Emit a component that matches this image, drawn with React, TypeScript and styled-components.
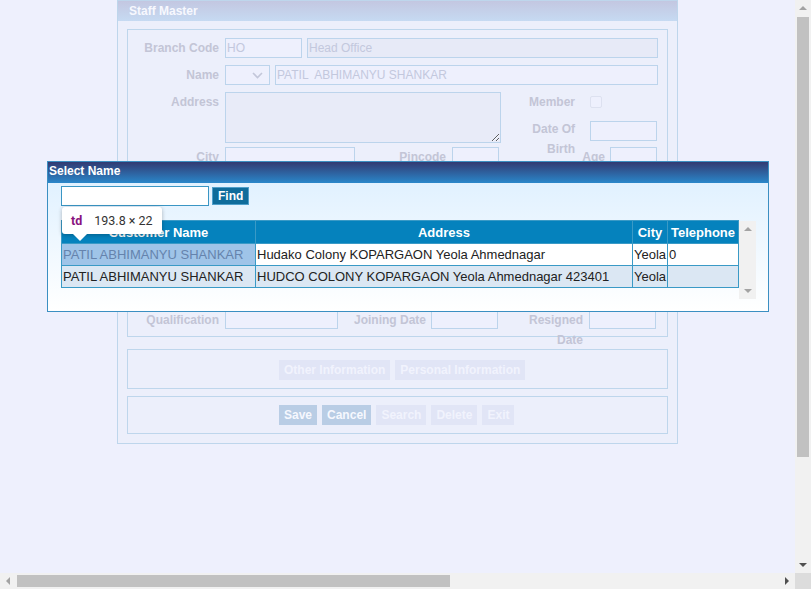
import React from 'react';
import styled, { createGlobalStyle } from 'styled-components';

const GlobalStyle = createGlobalStyle`
  html, body {
    margin: 0;
    padding: 0;
    overflow: hidden;
  }
  body {
    background: #eef0fd;
    font-family: "Liberation Sans", Arial, sans-serif;
    font-size: 12px;
  }
`;

// 페이지 전체
const Page = styled.div`
  position: relative;
  width: 100vw;
  height: 100vh;
  padding-left: 117px;
  box-sizing: border-box;
  overflow: hidden;
`;

const Panel = styled.div`
  width: 561px;
  box-sizing: border-box;
  border: 1px solid #bed6ec;
  background: #eceffb;
`;

const PanelHeader = styled.div`
  height: 20px;
  line-height: 20px;
  padding-left: 11px;
  background: linear-gradient(#c3c7e1, #c6daf2);
  color: #f7f8fe;
  font-weight: bold;
  font-size: 12px;
`;

const PanelBody = styled.div`
  padding: 8px 9px 9px;
`;

const Fieldset = styled.div`
  border: 1px solid #bed6ec;
  padding: 8px 0 6px;
`;

const Row = styled.div<{ $mt?: number; $h?: number }>`
  display: flex;
  align-items: flex-start;
  margin-top: ${(p) => p.$mt ?? 0}px;
  height: ${(p) => p.$h ?? 20}px;
`;

const Label = styled.div<{ $w: number; $gap?: number }>`
  width: ${(p) => p.$w}px;
  margin-right: ${(p) => p.$gap ?? 6}px;
  flex-shrink: 0;
  height: 20px;
  line-height: 20px;
  text-align: right;
  font-weight: bold;
  color: #c3c5d6;
  white-space: nowrap;
`;

const Input = styled.div<{ $w: number; $bg?: string; $h?: number }>`
  width: ${(p) => p.$w}px;
  height: ${(p) => p.$h ?? 20}px;
  line-height: ${(p) => (p.$h ?? 20) - 2}px;
  flex-shrink: 0;
  box-sizing: border-box;
  border: 1px solid #bcd4ec;
  background: ${(p) => p.$bg ?? '#eef0fd'};
  color: #c3c8dd;
  padding: 0 1px;
  white-space: pre;
  overflow: hidden;
`;

const Select = styled.div`
  width: 45px;
  height: 20px;
  margin-right: 5px;
  box-sizing: border-box;
  border: 1px solid #bcd4ec;
  background: #eef0fd;
  display: flex;
  align-items: center;
  justify-content: flex-end;
  padding-right: 6px;
`;

const TextArea = styled.textarea`
  width: 276px;
  height: 51px;
  box-sizing: border-box;
  border: 1px solid #bcd4ec;
  background: #e8ebf8;
  margin: 0;
  padding: 1px;
  flex-shrink: 0;
  outline: none;
`;

const RightColumn = styled.div`
  margin-left: 28px;
  display: flex;
  flex-direction: column;
  gap: 7px;
`;

const SubRow = styled.div`
  display: flex;
  align-items: flex-start;
  height: 20px;
`;

const CheckBox = styled.div`
  width: 12px;
  height: 12px;
  margin-top: 4px;
  box-sizing: border-box;
  border: 1px solid #dde1f0;
  border-radius: 2px;
  background: #eef0fd;
`;

const Hidden = styled.div`
  display: flex;
`;

const ButtonBox = styled.div<{ $mt: number; $pt: number }>`
  margin-top: ${(p) => p.$mt}px;
  border: 1px solid #bed6ec;
  padding: ${(p) => p.$pt}px 0 8px 151px;
  display: flex;
  gap: 5px;
`;

const FormButton = styled.div<{ $active?: boolean }>`
  height: 20px;
  line-height: 20px;
  padding: 0 5px;
  font-weight: bold;
  font-size: 12px;
  background: ${(p) => (p.$active ? '#b9cde5' : '#e1e5f6')};
  color: ${(p) => (p.$active ? '#f6f8fe' : '#f1f3fd')};
`;

/* ---------- 선택 모달 ---------- */

const Modal = styled.div`
  position: absolute;
  left: 47px;
  top: 161px;
  width: 722px;
  height: 151px;
  box-sizing: border-box;
  border: 1px solid #3b8fc2;
  background: linear-gradient(#dcefff, #ffffff);
`;

const ModalTitle = styled.div`
  height: 21px;
  line-height: 18px;
  padding-left: 1px;
  background: linear-gradient(#323a72, #2a87ca);
  color: #fff;
  font-weight: bold;
  font-size: 12px;
`;

const ModalBody = styled.div`
  padding: 3px 0 0 13px;
`;

const SearchRow = styled.div`
  display: flex;
  align-items: center;
  gap: 3px;
`;

const SearchInput = styled.input`
  width: 148px;
  height: 20px;
  box-sizing: border-box;
  border: 1px solid #3a96c4;
  background: #fff;
  margin: 0;
  padding: 0 2px;
  outline: none;
`;

const FindButton = styled.button`
  height: 18px;
  box-sizing: border-box;
  padding: 0 5px;
  margin: 0;
  border: 1px solid #4f9fcb;
  background: #0f6c9b;
  color: #fff;
  font-family: "Liberation Sans", Arial, sans-serif;
  font-weight: bold;
  font-size: 12px;
  line-height: 16px;
`;

const TableArea = styled.div`
  margin-top: 14px;
  display: flex;
  align-items: flex-start;
`;

const Table = styled.table`
  width: 677px;
  border-collapse: collapse;
  table-layout: fixed;
  font-size: 13px;
`;

const Th = styled.th`
  height: 22px;
  padding: 0;
  background: #0582bd;
  color: #fff;
  font-weight: bold;
  text-align: center;
  border: 1px solid #3a9ac6;
  white-space: nowrap;
  overflow: hidden;
`;

const Td = styled.td<{ $bg: string; $highlight?: boolean }>`
  height: 21px;
  padding: 0 1px;
  background: ${(p) => (p.$highlight ? '#9fc4e8' : p.$bg)};
  color: ${(p) => (p.$highlight ? '#6583ad' : '#222')};
  border: 1px solid #3a9ac6;
  white-space: nowrap;
  overflow: hidden;
`;

// 표 옆의 세로 스크롤바 (내용이 다 보여서 thumb 없음)
const MiniScroll = styled.div`
  width: 17px;
  height: 78px;
  margin-top: 1px;
  background: #f1f1f1;
  display: flex;
  flex-direction: column;
  justify-content: space-between;
  align-items: center;
  padding: 6px 0;
  box-sizing: border-box;
`;

const Arrow = styled.div<{ $dir: 'up' | 'down' | 'left' | 'right'; $color: string }>`
  width: 0;
  height: 0;
  ${(p) =>
    p.$dir === 'up'
      ? `border-left: 4px solid transparent; border-right: 4px solid transparent; border-bottom: 4px solid ${p.$color};`
      : p.$dir === 'down'
      ? `border-left: 4px solid transparent; border-right: 4px solid transparent; border-top: 4px solid ${p.$color};`
      : p.$dir === 'left'
      ? `border-top: 4px solid transparent; border-bottom: 4px solid transparent; border-right: 4px solid ${p.$color};`
      : `border-top: 4px solid transparent; border-bottom: 4px solid transparent; border-left: 4px solid ${p.$color};`}
`;

const Tooltip = styled.div`
  position: absolute;
  left: 14px;
  top: 45px;
  width: 100px;
  height: 27px;
  box-sizing: border-box;
  padding-left: 9px;
  display: flex;
  align-items: center;
  gap: 12px;
  background: #fff;
  border-radius: 3px;
  box-shadow: 0 1px 4px rgba(0, 0, 0, 0.28);
  font-family: Roboto, "Noto Sans", sans-serif;
  font-size: 12.5px;

  &::after {
    content: '';
    position: absolute;
    left: 11px;
    bottom: -7px;
    border-left: 7px solid transparent;
    border-right: 7px solid transparent;
    border-top: 7px solid #fff;
  }
`;

const TagName = styled.span`
  color: #881280;
  font-weight: bold;
`;

const TagSize = styled.span`
  color: #333;
`;

/* ---------- 브라우저 스크롤바 ---------- */

const VScroll = styled.div`
  position: fixed;
  top: 0;
  right: 0;
  width: 16px;
  height: calc(100% - 16px);
  background: #f1f1f1;
  display: flex;
  flex-direction: column;
  align-items: center;
`;

const VThumb = styled.div`
  width: 12px;
  height: 440px;
  margin: 1px 0 auto;
  background: #c1c1c1;
`;

const HScroll = styled.div`
  position: fixed;
  left: 0;
  bottom: 0;
  width: calc(100% - 16px);
  height: 16px;
  background: #f1f1f1;
  display: flex;
  align-items: center;
`;

const HThumb = styled.div`
  width: 433px;
  height: 12px;
  margin: 0 auto 0 1px;
  background: #c1c1c1;
`;

const Corner = styled.div`
  position: fixed;
  right: 0;
  bottom: 0;
  width: 16px;
  height: 16px;
  background: #dcdcdc;
`;

const ArrowSlot = styled.div`
  width: 16px;
  height: 16px;
  flex-shrink: 0;
  display: flex;
  align-items: center;
  justify-content: center;
`;

const rows = [
  {
    name: 'PATIL ABHIMANYU SHANKAR',
    address: 'Hudako Colony KOPARGAON Yeola Ahmednagar',
    city: 'Yeola',
    phone: '0',
    bg: '#ffffff',
  },
  {
    name: 'PATIL ABHIMANYU SHANKAR',
    address: 'HUDCO COLONY KOPARGAON Yeola Ahmednagar 423401',
    city: 'Yeola',
    phone: '',
    bg: '#dbe7f3',
  },
];

const hiddenRows = [
  ['State', 'Country', 'Phone'],
  ['Mobile', 'Email', 'Gender'],
  ['Designation', 'Department', 'Grade'],
  ['Salary', 'Bank', 'Account No'],
  ['PAN No', 'PF No', 'Blood Group'],
];

export default function App() {
  return (
    <>
      <GlobalStyle />
      <Page>
        <Panel>
          <PanelHeader>Staff Master</PanelHeader>
          <PanelBody>
            <Fieldset>
              <Row>
                <Label $w={91}>Branch Code</Label>
                <Input $w={77}>HO</Input>
                <Input $w={351} $bg="#e7eaf7" style={{ marginLeft: 5 }}>
                  Head Office
                </Input>
              </Row>
              <Row $mt={7}>
                <Label $w={91}>Name</Label>
                <Select>
                  <svg width="11" height="7" viewBox="0 0 11 7">
                    <path d="M1 1l4.5 4.5L10 1" fill="none" stroke="#c3c7da" strokeWidth="1.6" />
                  </svg>
                </Select>
                <Input $w={383}>PATIL  ABHIMANYU SHANKAR</Input>
              </Row>
              <Row $mt={7} $h={51}>
                <Label $w={91}>Address</Label>
                <TextArea readOnly />
                <RightColumn>
                  <SubRow>
                    <Label $w={46} $gap={15}>Member</Label>
                    <CheckBox />
                  </SubRow>
                  <SubRow>
                    <Label $w={46} $gap={15}>
                      Date Of
                      <br />
                      Birth
                    </Label>
                    <Input $w={67} style={{ marginTop: 2 }} />
                  </SubRow>
                </RightColumn>
              </Row>
              <Row $mt={4}>
                <Label $w={91}>City</Label>
                <Input $w={130} />
                <Label $w={91}>Pincode</Label>
                <Input $w={47} />
                <Label $w={106} $gap={5}>Age</Label>
                <Input $w={47} />
              </Row>
              {hiddenRows.map((r) => (
                <Row $mt={7} key={r[0]}>
                  <Hidden>
                    <Label $w={91}>{r[0]}</Label>
                    <Input $w={130} />
                    <Label $w={91}>{r[1]}</Label>
                    <Input $w={47} />
                    <Label $w={106} $gap={5}>{r[2]}</Label>
                    <Input $w={47} />
                  </Hidden>
                </Row>
              ))}
              <Row $mt={8}>
                <Label $w={91}>Qualification</Label>
                <Input $w={113} $h={19} />
                <Label $w={88} $gap={5}>Joining Date</Label>
                <Input $w={67} $h={19} />
                <Label $w={85}>
                  Resigned
                  <br />
                  Date
                </Label>
                <Input $w={67} $h={19} />
              </Row>
            </Fieldset>

            <ButtonBox $mt={12} $pt={10}>
              <FormButton>Other Information</FormButton>
              <FormButton>Personal Information</FormButton>
            </ButtonBox>

            <ButtonBox $mt={7} $pt={8}>
              <FormButton $active>Save</FormButton>
              <FormButton $active>Cancel</FormButton>
              <FormButton>Search</FormButton>
              <FormButton>Delete</FormButton>
              <FormButton>Exit</FormButton>
            </ButtonBox>
          </PanelBody>
        </Panel>

        <Modal>
          <ModalTitle>Select Name</ModalTitle>
          <ModalBody>
            <SearchRow>
              <SearchInput />
              <FindButton>Find</FindButton>
            </SearchRow>
            <TableArea>
              <Table>
                <colgroup>
                  <col style={{ width: 194 }} />
                  <col style={{ width: 377 }} />
                  <col style={{ width: 35 }} />
                  <col style={{ width: 71 }} />
                </colgroup>
                <thead>
                  <tr>
                    <Th>Customer Name</Th>
                    <Th>Address</Th>
                    <Th>City</Th>
                    <Th>Telephone</Th>
                  </tr>
                </thead>
                <tbody>
                  {rows.map((r, i) => (
                    <tr key={i}>
                      <Td $bg={r.bg} $highlight={i === 0}>{r.name}</Td>
                      <Td $bg={r.bg}>{r.address}</Td>
                      <Td $bg={r.bg}>{r.city}</Td>
                      <Td $bg={r.bg}>{r.phone}</Td>
                    </tr>
                  ))}
                </tbody>
              </Table>
              <MiniScroll>
                <Arrow $dir="up" $color="#a3a3a3" />
                <Arrow $dir="down" $color="#a3a3a3" />
              </MiniScroll>
            </TableArea>
          </ModalBody>
          <Tooltip>
            <TagName>td</TagName>
            <TagSize>193.8 × 22</TagSize>
          </Tooltip>
        </Modal>
      </Page>

      <VScroll>
        <ArrowSlot>
          <Arrow $dir="up" $color="#a3a3a3" />
        </ArrowSlot>
        <VThumb />
        <ArrowSlot>
          <Arrow $dir="down" $color="#505050" />
        </ArrowSlot>
      </VScroll>
      <HScroll>
        <ArrowSlot>
          <Arrow $dir="left" $color="#a3a3a3" />
        </ArrowSlot>
        <HThumb />
        <ArrowSlot>
          <Arrow $dir="right" $color="#505050" />
        </ArrowSlot>
      </HScroll>
      <Corner />
    </>
  );
}
